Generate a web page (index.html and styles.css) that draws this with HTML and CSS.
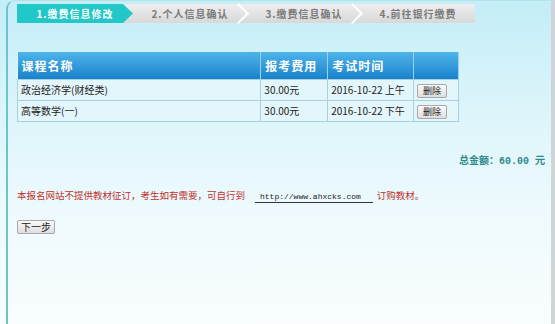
FILE: index.html
```html
<!DOCTYPE html>
<html lang="zh-CN">

    <head>
        <meta charset="UTF-8">
        <meta name="viewport" content="width=device-width, initial-scale=1.0">
        <title>缴费信息修改</title>
        <link rel="stylesheet" href="styles.css">
    </head>

    <body>
       <div id="frame">
        <div class="steps">
            <div class="step active">1.缴费信息修改</div>
            <div class="step">2.个人信息确认</div>
            <div class="step">3.缴费信息确认</div>
            <div class="step last">4.前往银行缴费</div>
        </div>

        <table class="course-table">
            <tr>
                <th class="col-name">课程名称</th>
                <th class="col-fee">报考费用</th>
                <th class="col-time">考试时间</th>
                <th class="col-op"></th>
            </tr>
            <tr>
                <td>政治经济学(财经类)</td>
                <td>30.00元</td>
                <td>2016-10-22 上午</td>
                <td><button class="btn-small">删除</button></td>
            </tr>
            <tr>
                <td>高等数学(一)</td>
                <td>30.00元</td>
                <td>2016-10-22 下午</td>
                <td><button class="btn-small">删除</button></td>
            </tr>
        </table>

        <div class="total">总金额：<span class="num">60.00 元</span></div>

        <p class="notice">本报名网站不提供教材征订，考生如有需要，可自行到<span class="link">http://www.ahxcks.com</span>订购教材。</p>

        <button class="btn-small btn-next">下一步</button>
       </div>
    </body>

</html>
```

FILE: styles.css
```css
*{
    margin:0;
    padding:0;
    box-sizing:border-box;
    font-family:"Noto Sans CJK SC", "Liberation Sans", sans-serif;
}
html, body{
    width:100%;
    height:100%;
}
body{
    background:linear-gradient(to bottom, #c4edf7 0%, #d9f4fa 30%, #eefafd 65%, #f9fdfe 100%);
    padding-left:6px;
    overflow:hidden;
}
#frame{
    width:549px;
    height:330px;
    border-left:2px solid #6cc4cc;
    border-top:1px solid #b4e4ea;
    border-right:4px solid #cfd4d6;
    border-top-left-radius:9px;
    padding:3px 6px 0 9px;
}
.steps{
    display:flex;
    width:458px;
    height:19px;
    background:linear-gradient(to bottom, #eeeeee, #d8d8d8);
}
.step{
    position:relative;
    width:114px;
    height:19px;
    line-height:19px;
    text-align:center;
    font-size:10px;
    font-weight:bold;
    letter-spacing:1px;
    color:#7a7a7a;
}
.step::after{
    content:"";
    position:absolute;
    right:1px;
    top:2px;
    width:13px;
    height:13px;
    border-top:2px solid #ffffff;
    border-right:2px solid #ffffff;
    transform:rotate(45deg);
}
.step.last::after{
    display:none;
}
.step.active{
    width:116px;
    color:#ffffff;
    background:#22c8c8;
    clip-path:polygon(0 0, calc(100% - 10px) 0, 100% 50%, calc(100% - 10px) 100%, 0 100%);
}
.step.active::after{
    display:none;
}
.course-table{
    margin-top:29px;
    width:442px;
    border-collapse:collapse;
    background-color:#e3f6fb;
    font-size:10px;
    color:#222222;
}
.course-table th{
    height:27px;
    text-align:left;
    padding-left:4px;
    font-size:12px;
    letter-spacing:1px;
    color:#ffffff;
    background:linear-gradient(to bottom, #4fb4ea, #1a82cc);
    border-right:1px solid #9fd2ea;
}
.course-table td{
    height:21px;
    padding-left:3px;
    border:1px solid #a6d2e0;
}
.col-name{ width:244px; }
.col-fee{ width:67px; }
.col-time{ width:86px; }
.col-op{ width:45px; }
.btn-small{
    height:14px;
    padding:0 5px;
    font-size:9px;
    line-height:12px;
    color:#222222;
    border:1px solid #a9a9a9;
    border-radius:2px;
    background:linear-gradient(to bottom, #fafafa, #dedede);
}
.total{
    margin-top:30px;
    text-align:right;
    font-size:10px;
    font-weight:bold;
    color:#2c8a8a;
}
.total .num{
    font-family:"Liberation Mono", monospace;
    font-size:10px;
}
.notice{
    margin-top:20px;
    font-size:9.5px;
    color:#c0302c;
    line-height:16px;
}
.link{
    display:inline-block;
    margin:0 4px 0 10px;
    padding:0 12px 0 5px;
    font-family:"Liberation Mono", monospace;
    font-size:8px;
    line-height:11px;
    color:#222222;
    border-bottom:1px solid #333333;
}
.btn-next{
    margin-top:17px;
    width:38px;
    padding:0;
    font-size:10px;
}
```
